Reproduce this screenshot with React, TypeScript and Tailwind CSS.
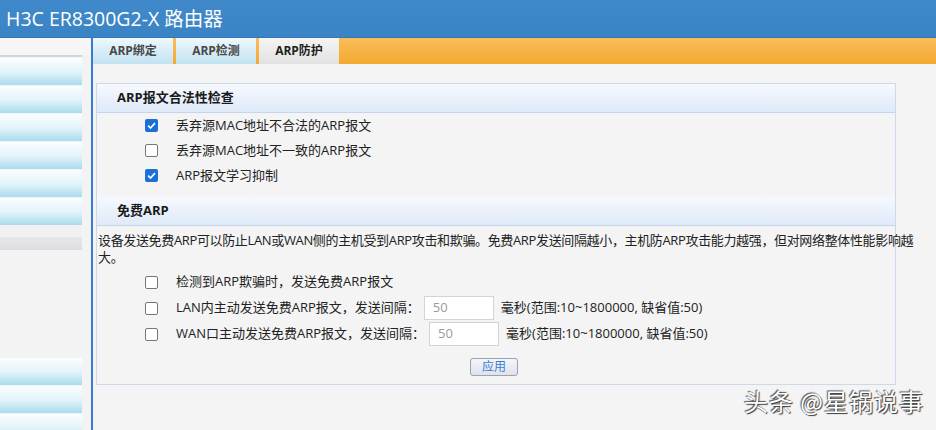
import React from "react";

const font = "font-['Open_Sans','Noto_Sans_CJK_SC',sans-serif]";

const Check = ({ on }: { on?: boolean }) =>
  on ? (
    <span className="flex h-[13px] w-[13px] items-center justify-center rounded-[2px] bg-[#1b6fd6]">
      <svg viewBox="0 0 12 12" className="h-[11px] w-[11px]">
        <path d="M2.3 6.2 L4.9 8.7 L9.8 3.4" fill="none" stroke="#fff" strokeWidth="1.8" />
      </svg>
    </span>
  ) : (
    <span className="h-[13px] w-[13px] rounded-[2px] border-[1.5px] border-[#767676] bg-white" />
  );

const Row = ({ on, children, h = "h-[25px]" }: { on?: boolean; children: React.ReactNode; h?: string }) => (
  <div className={`flex items-center ${h} pl-[48px]`}>
    <Check on={on} />
    <div className="ml-[18px] flex items-center text-[13px] text-[#222]">{children}</div>
  </div>
);

const Field = () => (
  <span className="mx-[4px] flex h-[24px] w-[70px] items-center border border-[#d4d4d4] bg-white pl-[8px] text-[13px] text-[#9a9a9a]">
    50
  </span>
);

const SideItem = () => (
  <div className="h-[28px] w-[82px] shrink-0 border-t border-[#eef8fc] bg-linear-to-b from-[#fbfeff] via-[#e4f4fa] to-[#a9dbee]" />
);

const Tab = ({ label, active }: { label: string; active?: boolean }) => (
  <div
    className={`flex h-[26px] w-[80px] items-center justify-center text-[12px] font-bold ${
      active
        ? "bg-linear-to-b from-[#f4f4f4] to-[#e2e2e2] text-[#1e1e1e]"
        : "bg-linear-to-b from-[#eef8fd] to-[#c2e2f1] text-[#484848]"
    }`}
  >
    {label}
  </div>
);

const SectionHead = ({ title }: { title: string }) => (
  <div className="flex h-[29px] items-center border-b border-[#c6d6ea] bg-linear-to-b from-[#f6f9fe] to-[#dfe9f8] pl-[20px] text-[13px] font-bold text-[#1a1a1a]">
    {title}
  </div>
);

export default function App() {
  return (
    <div className={`relative flex h-[430px] w-[936px] flex-col overflow-hidden bg-[#f4f4f4] ${font}`}>
      <div className="flex h-[38px] shrink-0 items-center border-b border-[#3676b6] bg-linear-to-b from-[#4089ca] to-[#3a83c4] pl-[6px] text-[19.5px] text-white">
        H3C ER8300G2-X 路由器
      </div>
      <div className="flex min-h-0 flex-1">
        <div className="flex w-[93px] shrink-0 flex-col overflow-hidden border-r-2 border-[#3a7bd2] bg-[#f3f3f3]">
          <div className="h-[17px] shrink-0 bg-[#f6f6f6]" />
          <div className="h-[2px] w-[82px] shrink-0 bg-[#d2d6da]" />
          <SideItem />
          <SideItem />
          <SideItem />
          <SideItem />
          <SideItem />
          <SideItem />
          <div className="h-[12px] w-[82px] shrink-0 bg-[#f1f1f1]" />
          <div className="h-[13px] w-[82px] shrink-0 bg-linear-to-b from-[#e6e7e9] to-[#dcdee1]" />
          <div className="h-[107px] shrink-0" />
          <SideItem />
          <SideItem />
          <SideItem />
        </div>
        <div className="flex flex-1 flex-col">
          <div className="flex h-[26px] shrink-0 gap-[3px] bg-linear-to-b from-[#f7be58] to-[#f5a82f]">
            <Tab label="ARP绑定" />
            <Tab label="ARP检测" />
            <Tab label="ARP防护" active />
          </div>
          <div className="ml-[3px] mt-[19px] w-[800px] shrink-0 border border-[#cbd9ea]">
            <SectionHead title="ARP报文合法性检查" />
            <div className="flex flex-col">
              <Row on>丢弃源MAC地址不合法的ARP报文</Row>
              <Row>丢弃源MAC地址不一致的ARP报文</Row>
              <Row on>ARP报文学习抑制</Row>
            </div>
            <div className="h-[9px]" />
            <SectionHead title="免费ARP" />
            <div className="w-[826px] pl-[1px] pt-[6px] text-[13px] leading-[17px] tracking-[-0.35px] text-[#222]">
              设备发送免费ARP可以防止LAN或WAN侧的主机受到ARP攻击和欺骗。免费ARP发送间隔越小，主机防ARP攻击能力越强，但对网络整体性能影响越大。
            </div>
            <div className="mt-[3px] flex flex-col">
              <Row h="h-[26px]">检测到ARP欺骗时，发送免费ARP报文</Row>
              <Row h="h-[26px]">
                LAN内主动发送免费ARP报文，发送间隔：
                <Field />
                <span className="ml-[3px]">毫秒(范围:10~1800000, 缺省值:50)</span>
              </Row>
              <Row h="h-[26px]">
                WAN口主动发送免费ARP报文，发送间隔：
                <Field />
                <span className="ml-[3px]">毫秒(范围:10~1800000, 缺省值:50)</span>
              </Row>
            </div>
            <div className="flex justify-center pb-[8px] pt-[11px]">
              <button className="ml-[-4px] flex h-[18px] w-[48px] items-center justify-center rounded-[3px] border border-[#9da3ad] bg-linear-to-b from-[#f3f5fa] to-[#dde2ec] text-[12px] text-[#3b7bd0]">
                应用
              </button>
            </div>
          </div>
        </div>
      </div>
      <div className="absolute right-[12px] top-[389px] text-[24px] leading-none tracking-[1px] text-white [text-shadow:1px_1px_1px_#333,-1px_-1px_1px_#555] font-['Noto_Sans_CJK_SC',sans-serif]">
        头条 @星锅说事
      </div>
    </div>
  );
}
